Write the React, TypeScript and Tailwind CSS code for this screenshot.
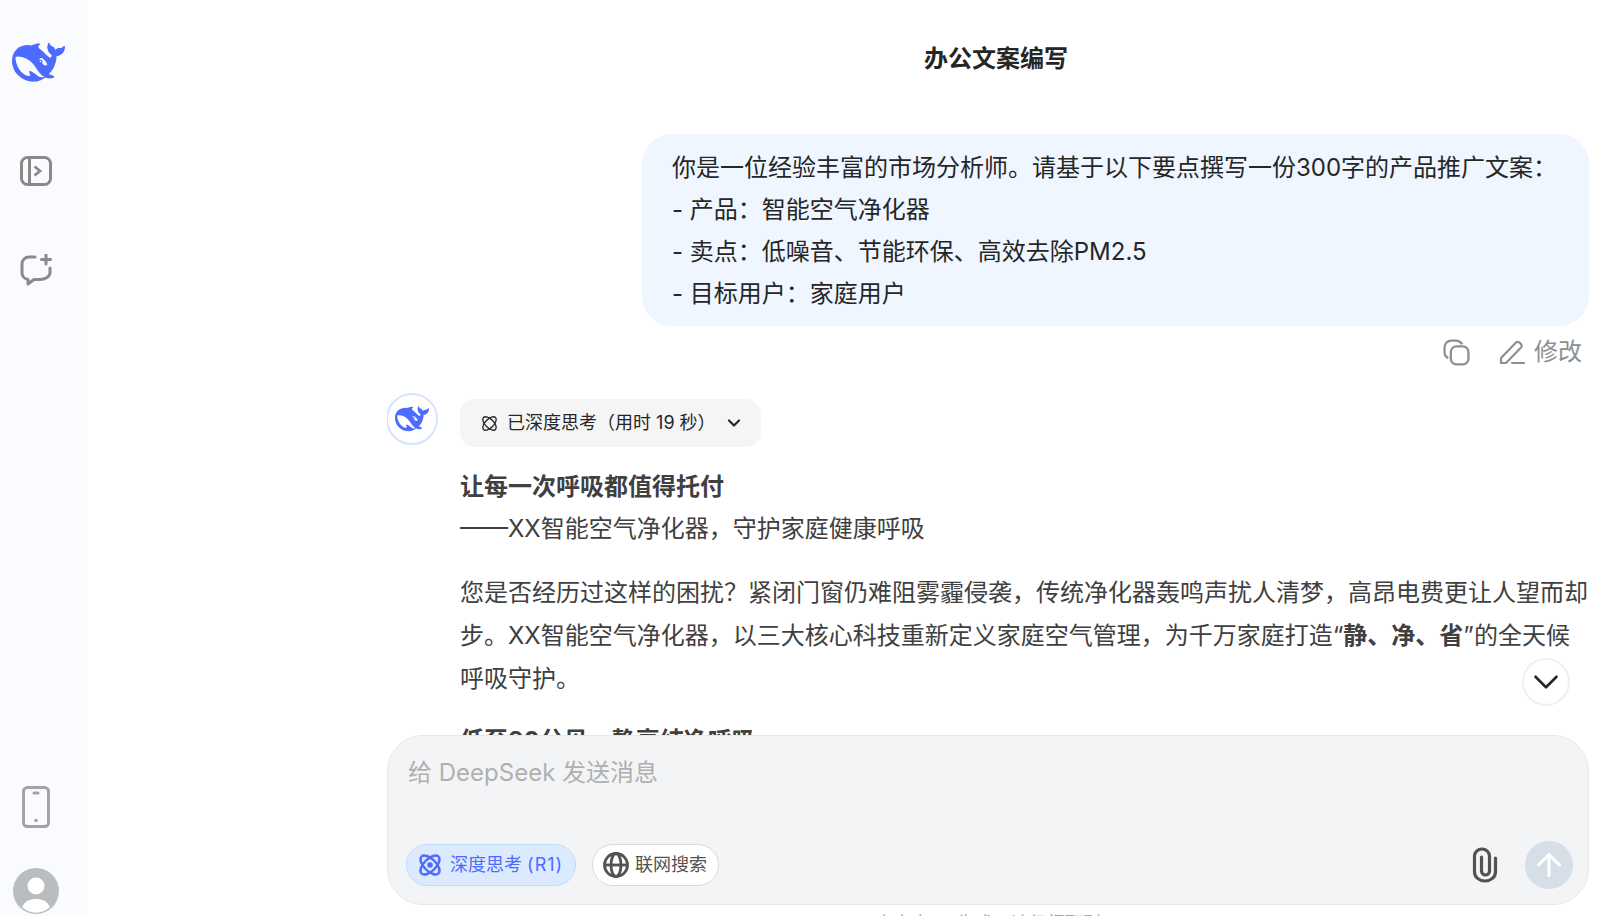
import { ChevronDown, ArrowUp } from 'lucide-react';

const whalePath =
  'M23.748 4.482c-.254-.124-.364.113-.512.234-.051.039-.094.09-.137.136-.372.397-.806.657-1.373.626-.829-.046-1.537.214-2.163.848-.133-.782-.575-1.248-1.247-1.548-.352-.156-.708-.311-.955-.65-.172-.241-.219-.51-.305-.774-.055-.16-.11-.323-.293-.35-.2-.031-.278.136-.356.276-.313.572-.434 1.202-.422 1.84.027 1.436.633 2.58 1.838 3.393.137.093.172.187.129.323-.082.28-.18.552-.266.833-.055.179-.137.217-.329.14a5.526 5.526 0 01-1.736-1.18c-.857-.828-1.631-1.742-2.597-2.458a11.365 11.365 0 00-.689-.471c-.985-.957.13-1.743.388-1.836.27-.098.093-.432-.779-.428-.872.004-1.67.295-2.687.684a3.055 3.055 0 01-.465.137 9.597 9.597 0 00-2.883-.102c-1.885.21-3.39 1.102-4.497 2.623C.082 8.606-.231 10.684.152 12.85c.403 2.284 1.569 4.175 3.36 5.653 1.858 1.533 3.997 2.284 6.438 2.14 1.482-.085 3.133-.284 4.994-1.86.47.234.962.327 1.78.397.63.059 1.236-.03 1.705-.128.735-.156.684-.837.419-.961-2.155-1.004-1.682-.595-2.113-.926 1.096-1.296 2.746-2.642 3.392-7.003.05-.347.007-.565 0-.845-.004-.17.035-.237.23-.256a4.173 4.173 0 001.545-.475c1.396-.763 1.96-2.015 2.093-3.517.02-.23-.004-.467-.247-.588zM11.581 18c-2.089-1.642-3.102-2.183-3.52-2.16-.392.024-.321.471-.235.763.09.288.207.486.371.739.114.167.192.416-.113.603-.673.416-1.842-.14-1.897-.167-1.361-.802-2.5-1.86-3.301-3.307-.774-1.393-1.224-2.887-1.298-4.482-.02-.386.093-.522.477-.592a4.696 4.696 0 011.529-.039c2.132.312 3.946 1.265 5.468 2.774.868.86 1.525 1.887 2.202 2.891.72 1.066 1.494 2.082 2.48 2.914.348.292.625.514.891.677-.802.09-2.14.11-3.054-.614zm1-6.44a.306.306 0 01.415-.287.302.302 0 01.2.288.306.306 0 01-.31.307.303.303 0 01-.304-.308zm3.11 1.596c-.2.081-.399.151-.59.16a1.245 1.245 0 01-.798-.254c-.274-.23-.47-.358-.552-.758a1.73 1.73 0 01.016-.588c.07-.327-.008-.537-.239-.727-.187-.156-.426-.199-.688-.199a.559.559 0 01-.254-.078c-.11-.054-.2-.19-.114-.358.028-.054.16-.186.192-.21.356-.202.767-.136 1.146.016.352.144.618.408 1.001.782.391.451.462.576.685.914.176.265.336.537.445.848.067.195-.019.354-.25.452z';

function Whale({ className }: { className?: string }) {
  return (
    <svg viewBox="0 0 24 24" className={className} fill="#4d6bfe">
      <path d={whalePath} />
    </svg>
  );
}

function AtomIcon({ className, dot, stroke = 2.4 }: { className?: string; dot?: boolean; stroke?: number }) {
  return (
    <svg viewBox="0 0 24 24" className={className} fill="none" stroke="currentColor" strokeWidth={stroke}>
      <ellipse cx="12" cy="12" rx="12" ry="6" transform="rotate(45 12 12)" />
      <ellipse cx="12" cy="12" rx="12" ry="6" transform="rotate(-45 12 12)" />
      {dot && <circle cx="12" cy="12" r="2.8" fill="currentColor" stroke="none" />}
    </svg>
  );
}

function SidebarToggle() {
  return (
    <svg viewBox="0 0 32 30" className="w-8 h-[30px]" fill="none" stroke="#8a8a8a" strokeWidth="3">
      <rect x="1.5" y="1.5" width="29" height="27" rx="6" />
      <path d="M9.5 2v26" />
      <path d="M14.5 10.5l5.5 4.5-5.5 4.5" strokeWidth="2.8" />
    </svg>
  );
}

function NewChat() {
  return (
    <svg viewBox="0 0 32 32" className="w-8 h-8" fill="none" stroke="#8a8a8a" strokeWidth="3" strokeLinecap="round">
      <path d="M15 3H9a7 7 0 0 0-7 7v9a7 7 0 0 0 6 6.5V30l6-4.5h6a10 7 0 0 0 10-6V14" strokeLinejoin="round" />
      <path d="M26 1v9M21.5 5.5h9" />
    </svg>
  );
}

function Phone() {
  return (
    <svg viewBox="0 0 28 42" className="w-7 h-[42px]" fill="none" stroke="#a3a3a3" strokeWidth="3">
      <rect x="1.5" y="1.5" width="25" height="39" rx="4" />
      <rect x="10.5" y="5.5" width="7" height="3" rx="1.5" fill="#a3a3a3" stroke="none" />
      <circle cx="14" cy="34.5" r="1.8" fill="#a3a3a3" stroke="none" />
    </svg>
  );
}

function Avatar() {
  return (
    <svg viewBox="0 0 46 46" className="w-[46px] h-[46px]">
      <circle cx="23" cy="23" r="23" fill="#b9bcc1" />
      <circle cx="23" cy="18" r="8.5" fill="#fff" />
      <path d="M9 39c3-6 8-8 14-8s11 2 14 8a20 20 0 0 1-28 0z" fill="#fff" />
    </svg>
  );
}

function CopyIcon() {
  return (
    <svg viewBox="0 0 26 26" className="w-[27px] h-[27px]" fill="none" stroke="#8f8f8f" strokeWidth="2.2">
      <path d="M5 18.5A7 7 0 0 1 1.5 12V8A6.5 6.5 0 0 1 8 1.5h5A7 7 0 0 1 18.5 5" />
      <rect x="7.5" y="7" width="17" height="17.5" rx="5.5" />
    </svg>
  );
}

function Pencil() {
  return (
    <svg viewBox="0 0 26 26" className="w-[26px] h-[26px]" fill="none" stroke="#8f8f8f" strokeWidth="2.2" strokeLinejoin="round" strokeLinecap="round">
      <path d="M2 24v-5L17 3.5a2.4 2.4 0 0 1 3.4 0l1.6 1.6a2.4 2.4 0 0 1 0 3.4L7 24z" />
      <path d="M13 24h12" />
    </svg>
  );
}

function GlobeIcon() {
  return (
    <svg viewBox="0 0 26 26" className="w-[26px] h-[26px] mr-[6px]" fill="none" stroke="currentColor" strokeWidth="2.8">
      <circle cx="13" cy="13" r="11.5" />
      <ellipse cx="13" cy="13" rx="5" ry="11.5" />
      <path d="M1.5 13h23" />
    </svg>
  );
}

function ClipIcon() {
  return (
    <svg viewBox="0 0 26 36" className="w-[26px] h-[36px] mr-[27px]" fill="none" stroke="#525252" strokeWidth="3.2" strokeLinecap="round">
      <path d="M23.5 11v14a10.5 9 0 0 1-21 0V9a7.5 7 0 0 1 15 0v15a4 4 0 0 1-8 0V10" />
    </svg>
  );
}

export default function App() {
  return (
    <div className="flex h-screen overflow-hidden bg-white font-['Inter','Noto_Sans_CJK_SC',sans-serif] text-[24px] leading-[42px] text-[#262626]">
      {/* Sidebar */}
      <aside className="w-[88px] shrink-0 flex flex-col items-start bg-[#f9fbff]">
        <Whale className="w-[53px] h-[53px] mt-[36px] ml-[12px]" />
        <div className="mt-[67px] ml-[20px]"><SidebarToggle /></div>
        <div className="mt-[68px] ml-[20px]"><NewChat /></div>
        <div className="mt-auto ml-[22px]"><Phone /></div>
        <div className="mt-[40px] mb-[2px] ml-[13px]"><Avatar /></div>
      </aside>

      {/* Main */}
      <main className="flex-1 min-w-0 flex flex-col pl-[299px] pr-[18px]">
        <h1 className="h-[134px] shrink-0 pt-[38px] pl-[16px] text-center font-bold leading-[42px] text-[#262626]">办公文案编写</h1>

        <div className="relative flex-1 min-h-0 overflow-hidden">
          <div className="flex flex-col items-end">
            <div className="w-[947px] rounded-[30px] bg-[#eff6ff] px-[30px] pt-[13px] pb-[11px]">
              <p>你是一位经验丰富的市场分析师。请基于以下要点撰写一份300字的产品推广文案：</p>
              <p>- 产品：智能空气净化器</p>
              <p>- 卖点：低噪音、节能环保、高效去除PM2.5</p>
              <p>- 目标用户：家庭用户</p>
            </div>
            <div className="flex items-center gap-[29px] h-[52px] mr-[7px] text-[#8f8f8f]">
              <CopyIcon />
              <div className="flex items-center gap-[9px]">
                <Pencil />
                <span>修改</span>
              </div>
            </div>
          </div>

          <div className="flex gap-[22px] mt-[15px] -ml-[1px]">
            <div className="w-[52px] h-[52px] shrink-0 rounded-full border-2 border-[#d6e4ff] flex items-center justify-center">
              <Whale className="w-[34px] h-[34px]" />
            </div>
            <div className="min-w-0 text-[#404040]">
              <div className="inline-flex items-center h-[48px] mt-[6px] rounded-[15px] bg-[#f5f5f5] pl-[21px] pr-[17px] text-[18px] text-[#262626]">
                <AtomIcon className="w-[17px] h-[17px] mr-[9px]" stroke={1.9} />
                <span>已深度思考（用时 19 秒）</span>
                <ChevronDown className="w-[20px] h-[20px] ml-[8px]" strokeWidth={2.6} />
              </div>
              <p className="mt-[19px] font-bold">让每一次呼吸都值得托付</p>
              <p>——XX智能空气净化器，守护家庭健康呼吸</p>
              <p className="mt-[21px] leading-[43px]">
                您是否经历过这样的困扰？紧闭门窗仍难阻雾霾侵袭，传统净化器轰鸣声扰人清梦，高昂电费更让人望而却步。XX智能空气净化器，以三大核心科技重新定义家庭空气管理，为千万家庭打造“
                <strong className="font-bold">静、净、省</strong>
                ”的全天候呼吸守护。
              </p>
              <p className="mt-[20px] font-bold">低至30分贝，静享纯净呼吸</p>
            </div>
          </div>

          <button className="absolute right-[19px] top-[524px] w-[48px] h-[48px] rounded-full border-2 border-[#f0f0f0] bg-white flex items-center justify-center text-[#262626]">
            <ChevronDown className="w-[42px] h-[42px]" strokeWidth={1.5} />
          </button>
        </div>

        {/* Composer */}
        <div className="h-[170px] shrink-0 rounded-[36px] border border-[#e5e7eb] bg-[#f3f4f6] flex flex-col pl-[18px] pr-[15px] pb-[15px]">
          <div className="pt-[16px] px-[2px] text-[#b0b0b0]">给 DeepSeek 发送消息</div>
          <div className="mt-auto flex items-center h-[48px]">
            <div className="flex items-center h-[42px] rounded-full border border-[#bfdbfe] bg-[#dbeafe] pl-[11px] pr-[12px] text-[18px] text-[#4d6bfe]">
              <AtomIcon className="w-[24px] h-[24px] mr-[8px]" dot />
              <span>深度思考 <span className="tracking-[1px]">(R1)</span></span>
            </div>
            <div className="flex items-center h-[42px] ml-[16px] rounded-full border border-[#d9d9d9] bg-white pl-[10px] pr-[11px] text-[18px] text-[#525252]">
              <GlobeIcon />
              <span>联网搜索</span>
            </div>
            <div className="ml-auto"><ClipIcon /></div>
            <div className="w-[48px] h-[48px] rounded-full bg-[#d6dee8] flex items-center justify-center text-white">
              <ArrowUp className="w-[36px] h-[36px]" strokeWidth={2} />
            </div>
          </div>
        </div>
        <div className="shrink-0 mt-[5px] h-[6px] text-center text-[18px] leading-[28px] text-[#a3a3a3]">内容由 AI 生成，请仔细甄别</div>
      </main>
    </div>
  );
}
